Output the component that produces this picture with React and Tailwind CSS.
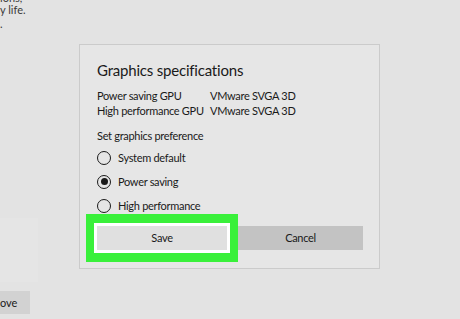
export default function App() {
  const options = ["System default", "Power saving", "High performance"];
  const selected = "Power saving";

  return (
    <div
      className="flex w-[460px] h-[319px] overflow-hidden bg-[#e3e3e3] text-[#1a1a1a]"
      style={{ fontFamily: 'Lato, "Noto Sans", sans-serif' }}
    >
      {/* Background page, mostly covered */}
      <div className="flex flex-col w-[79px] shrink-0">
        <div className="-mt-[8px] text-[11px] leading-[12px] text-[#3a3a3a] whitespace-nowrap">
          <p>ions,</p>
          <p>y life.</p>
          <p className="mt-[2px]">.</p>
        </div>
        <div className="mt-[188px] w-[38px] h-[64px] bg-[#e5e5e5]"></div>
        <div className="mt-[9px] w-[30px] h-[23px] bg-[#d2d2d2] text-[11px] leading-[23px] overflow-hidden">
          ove
        </div>
      </div>

      {/* Dialog */}
      <div className="mt-[44px] w-[301px] h-[225px] shrink-0 border border-[#cbcbcb] bg-[#e6e6e6] flex flex-col pl-[17px] pr-[16px] text-[11px] tracking-[-0.3px]">
        <h2 className="mt-[15px] text-[15px] tracking-[-0.2px] leading-[20px] text-[#1a1a1a]">
          Graphics specifications
        </h2>
        <div className="mt-[8px] grid grid-cols-[113px_1fr] leading-[15px] whitespace-nowrap">
          <span>Power saving GPU</span>
          <span>VMware SVGA 3D</span>
          <span>High performance GPU</span>
          <span>VMware SVGA 3D</span>
        </div>
        <p className="mt-[10px] leading-[15px]">Set graphics preference</p>

        <div className="mt-[7px] flex flex-col gap-[9px]">
          {options.map((o) => (
            <label key={o} className="flex items-center gap-[7px] leading-[15px]">
              <span className="w-[14px] h-[14px] rounded-full border-[1.5px] border-[#1a1a1a] flex items-center justify-center">
                {o === selected && (
                  <span className="w-[7px] h-[7px] rounded-full bg-[#1a1a1a]"></span>
                )}
              </span>
              {o}
            </label>
          ))}
        </div>

        <div className="mt-[1px] -ml-[11px] flex items-center">
          <div className="px-[8px] py-[9px] bg-[#39f03a]">
            <button className="w-[136px] h-[30px] border-[3px] border-white bg-[#e0e0e0] text-[11px] tracking-[-0.3px] text-[#1a1a1a]">
              Save
            </button>
          </div>
          <button className="w-[125px] h-[24px] bg-[#c3c3c3] text-[11px] tracking-[-0.3px] text-[#1a1a1a]">
            Cancel
          </button>
        </div>
      </div>
    </div>
  );
}
